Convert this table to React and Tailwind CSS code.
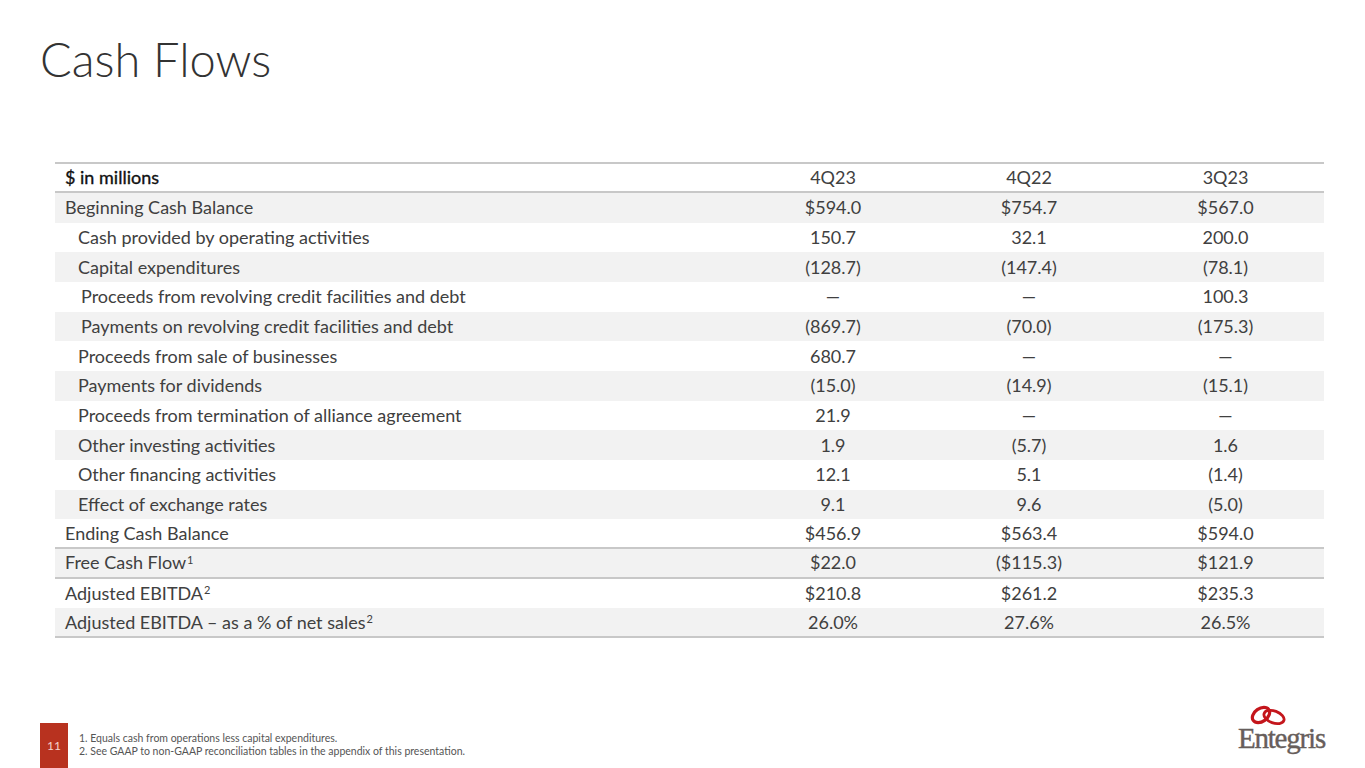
import React from "react";

const rows = [
  { label: "Beginning Cash Balance", values: ["$594.0", "$754.7", "$567.0"], indent: 0 },
  { label: "Cash provided by operating activities", values: ["150.7", "32.1", "200.0"], indent: 1 },
  { label: "Capital expenditures", values: ["(128.7)", "(147.4)", "(78.1)"], indent: 1 },
  { label: "Proceeds from revolving credit facilities and debt", values: ["—", "—", "100.3"], indent: 2 },
  { label: "Payments on revolving credit facilities and debt", values: ["(869.7)", "(70.0)", "(175.3)"], indent: 2 },
  { label: "Proceeds from sale of businesses", values: ["680.7", "—", "—"], indent: 1 },
  { label: "Payments for dividends", values: ["(15.0)", "(14.9)", "(15.1)"], indent: 1 },
  { label: "Proceeds from termination of alliance agreement", values: ["21.9", "—", "—"], indent: 1 },
  { label: "Other investing activities", values: ["1.9", "(5.7)", "1.6"], indent: 1 },
  { label: "Other financing activities", values: ["12.1", "5.1", "(1.4)"], indent: 1 },
  { label: "Effect of exchange rates", values: ["9.1", "9.6", "(5.0)"], indent: 1 },
  { label: "Ending Cash Balance", values: ["$456.9", "$563.4", "$594.0"], indent: 0, line: true },
  { label: "Free Cash Flow", sup: "1", values: ["$22.0", "($115.3)", "$121.9"], indent: 0, line: true },
  { label: "Adjusted EBITDA", sup: "2", values: ["$210.8", "$261.2", "$235.3"], indent: 0 },
  { label: "Adjusted EBITDA – as a % of net sales", sup: "2", values: ["26.0%", "27.6%", "26.5%"], indent: 0, line: true },
];

const indentClass = ["pl-[10px]", "pl-[23px]", "pl-[26px]"];

const EntegrisLogo = () => (
  <div className="flex flex-col items-end">
    <svg width="40" height="24" viewBox="0 0 40 24" className="mr-[36px] -mb-[4px]">
      <ellipse cx="12" cy="11" rx="9.5" ry="6.5" transform="rotate(-35 12 11)" fill="none" stroke="#c4161c" strokeWidth="3.2" />
      <ellipse cx="25" cy="13" rx="10.5" ry="6" transform="rotate(20 25 13)" fill="none" stroke="#c4161c" strokeWidth="2.8" />
    </svg>
    <span
      className="text-[29px] leading-none text-[#675e5b] tracking-[-1.2px] [-webkit-text-stroke:0.4px_#675e5b]"
      style={{ fontFamily: '"Liberation Serif", serif' }}
    >
      Entegris
    </span>
  </div>
);

export default function App() {
  return (
    <div
      className="w-[1365px] h-[768px] bg-white flex flex-col text-[#404040]"
      style={{ fontFamily: 'Lato, "Liberation Sans", sans-serif' }}
    >
      <h1 className="pl-[40px] pt-[31px] text-[47px] leading-[56px] font-light text-[#333333]">Cash Flows</h1>

      <div className="mt-[75px] mx-[55px] w-[1269px] text-[18px]">
        <div className="flex h-[31px] items-center border-t-2 border-b-2 border-[#c8c8c8]">
          <div className="w-[680px] pl-[10px] text-[#111111] [-webkit-text-stroke:0.35px_#111111]">$ in millions</div>
          <div className="w-[196px] text-center">4Q23</div>
          <div className="w-[196px] text-center">4Q22</div>
          <div className="w-[197px] text-center">3Q23</div>
        </div>
        {rows.map((row, i) => (
          <div
            key={row.label}
            className={`flex h-[29.67px] items-center ${i % 2 === 0 ? "bg-[#f2f2f2]" : "bg-white"} ${row.line ? "border-b-2 border-[#c8c8c8]" : ""}`}
          >
            <div className={`w-[680px] ${indentClass[row.indent]}`}>
              {row.label}
              {row.sup && <sup className="text-[11px] ml-[1px]">{row.sup}</sup>}
            </div>
            {row.values.map((v, j) => (
              <div key={j} className={`${j === 2 ? "w-[197px]" : "w-[196px]"} text-center`}>
                {v}
              </div>
            ))}
          </div>
        ))}
      </div>

      <div className="mt-auto flex items-end justify-between pr-[40px]">
        <div className="flex items-center">
          <div className="ml-[40px] w-[28px] h-[45px] bg-[#b8321f] flex items-center justify-center text-[12px] text-[#f4d2cc]">
            11
          </div>
          <div className="ml-[11px] text-[10.5px] leading-[13px] text-[#555555] pb-[2px]">
            <div>1. Equals cash from operations less capital expenditures.</div>
            <div>2. See GAAP to non-GAAP reconciliation tables in the appendix of this presentation.</div>
          </div>
        </div>
        <div className="pb-[15px]">
          <EntegrisLogo />
        </div>
      </div>
    </div>
  );
}
